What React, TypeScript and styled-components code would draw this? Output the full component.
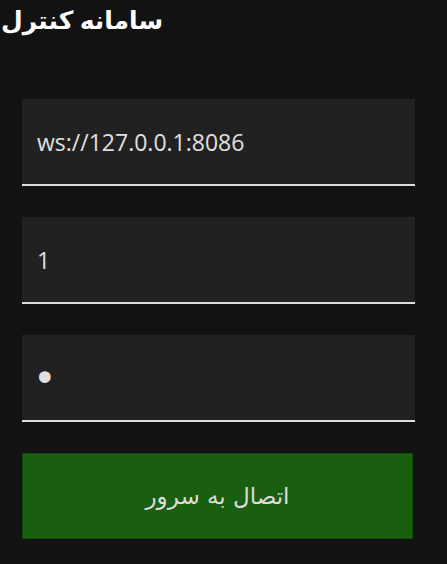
import React from "react";
import styled, { createGlobalStyle } from "styled-components";

const GlobalStyle = createGlobalStyle`
  html, body {
    margin: 0;
    padding: 0;
    background-color: #121212;
    color: #e0e0e0;
    font-family: "Open Sans", "DejaVu Sans", sans-serif;
  }
`;

const Page = styled.div`
  min-height: 564px;
  background-color: #121212;
`;

const Title = styled.h1`
  margin: 0;
  padding: 0 0 0 1px;
  font-size: 25px;
  line-height: 38px;
  font-weight: 700;
  color: #ffffff;
  text-align: left;
`;

const Form = styled.form`
  display: flex;
  flex-direction: column;
  gap: 31px;
  width: 393px;
  margin: 61px 0 0 22px;
`;

const Field = styled.input<{ $secret?: boolean }>`
  box-sizing: border-box;
  width: 100%;
  height: 87px;
  padding: 0 15px 0 ${(props) => (props.$secret ? "11px" : "15px")};
  border: none;
  border-bottom: 2px solid #dedede;
  background-color: #212121;
  color: #e0e0e0;
  font-family: ${(props) => (props.$secret ? `"DejaVu Sans", sans-serif` : `"Open Sans", "DejaVu Sans", sans-serif`)};
  font-size: ${(props) => (props.$secret ? "40px" : "23px")};
  outline: none;
`;

const SubmitButton = styled.button`
  box-sizing: border-box;
  width: 391px;
  height: 86px;
  border: 1px solid #0f4a0a;
  background-color: #1a5e0f;
  color: #dcdcdc;
  font-family: "DejaVu Sans", sans-serif;
  font-size: 23px;
  cursor: pointer;
`;

function App() {
  return (
    <Page>
      <GlobalStyle />
      <Title dir="rtl">سامانه کنترل</Title>
      <Form onSubmit={(e) => e.preventDefault()}>
        <Field type="text" defaultValue="ws://127.0.0.1:8086" />
        <Field type="text" defaultValue="1" />
        <Field type="password" defaultValue="a" $secret />
        <SubmitButton type="submit">اتصال به سرور</SubmitButton>
      </Form>
    </Page>
  );
}

export default App;
